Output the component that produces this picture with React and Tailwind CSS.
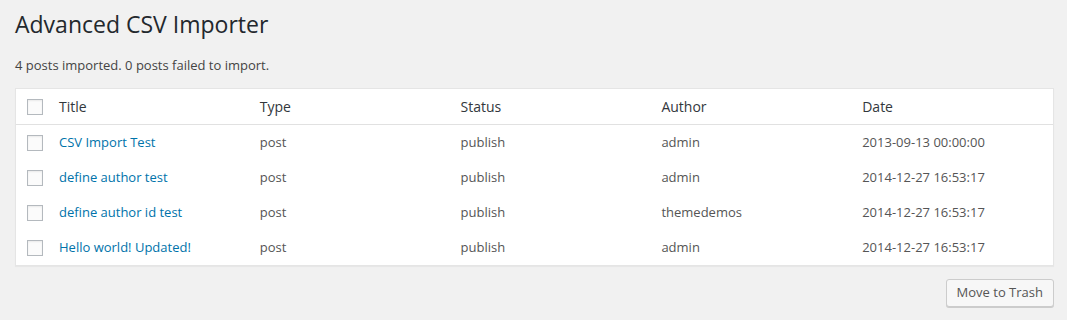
const rows = [
  { title: "CSV Import Test", type: "post", status: "publish", author: "admin", date: "2013-09-13 00:00:00" },
  { title: "define author test", type: "post", status: "publish", author: "admin", date: "2014-12-27 16:53:17" },
  { title: "define author id test", type: "post", status: "publish", author: "themedemos", date: "2014-12-27 16:53:17" },
  { title: "Hello world! Updated!", type: "post", status: "publish", author: "admin", date: "2014-12-27 16:53:17" },
];

function Checkbox() {
  return (
    <span className="block w-4 h-4 border border-[#b4b9be] bg-[#fbfbfb] shadow-[inset_0_1px_2px_rgba(0,0,0,0.07)]" />
  );
}

export default function App() {
  return (
    <div
      className="min-h-[320px] bg-[#f1f1f1] text-[#444] pl-[15px] pr-[13px] pt-[7px]"
      style={{ fontFamily: '"Open Sans", "Liberation Sans", sans-serif' }}
    >
      {/* Page Header */}
      <h1 className="text-[23px] leading-[34px] font-normal text-[#23282d]">Advanced CSV Importer</h1>
      <p className="text-[13px] leading-[20px] mt-[14px] mb-[13px]">
        4 posts imported. 0 posts failed to import.
      </p>

      {/* Table */}
      <div className="bg-white border border-[#e5e5e5] shadow-[0_1px_1px_rgba(0,0,0,0.04)] text-[13px]">
        <div className="grid grid-cols-[33px_repeat(5,1fr)] items-center h-[36px] border-b border-[#e1e1e1] text-[14px] text-[#32373c]">
          <div className="pl-[11px]">
            <Checkbox />
          </div>
          <div className="px-[10px]">Title</div>
          <div className="px-[10px]">Type</div>
          <div className="px-[10px]">Status</div>
          <div className="px-[10px]">Author</div>
          <div className="px-[10px]">Date</div>
        </div>
        {rows.map((r) => (
          <div key={r.title} className="grid grid-cols-[33px_repeat(5,1fr)] items-center h-[35px] text-[#555]">
            <div className="pl-[11px]">
              <Checkbox />
            </div>
            <div className="px-[10px]">
              <a href="#" className="text-[#0073aa]">{r.title}</a>
            </div>
            <div className="px-[10px]">{r.type}</div>
            <div className="px-[10px]">{r.status}</div>
            <div className="px-[10px]">{r.author}</div>
            <div className="px-[10px]">{r.date}</div>
          </div>
        ))}
      </div>

      {/* Action Row */}
      <div className="flex justify-end mt-[13px]">
        <button className="h-[28px] px-[10px] text-[13px] text-[#555] bg-[#f7f7f7] border border-[#cccccc] rounded-[3px] shadow-[0_1px_0_#cccccc]">
          Move to Trash
        </button>
      </div>
    </div>
  );
}
